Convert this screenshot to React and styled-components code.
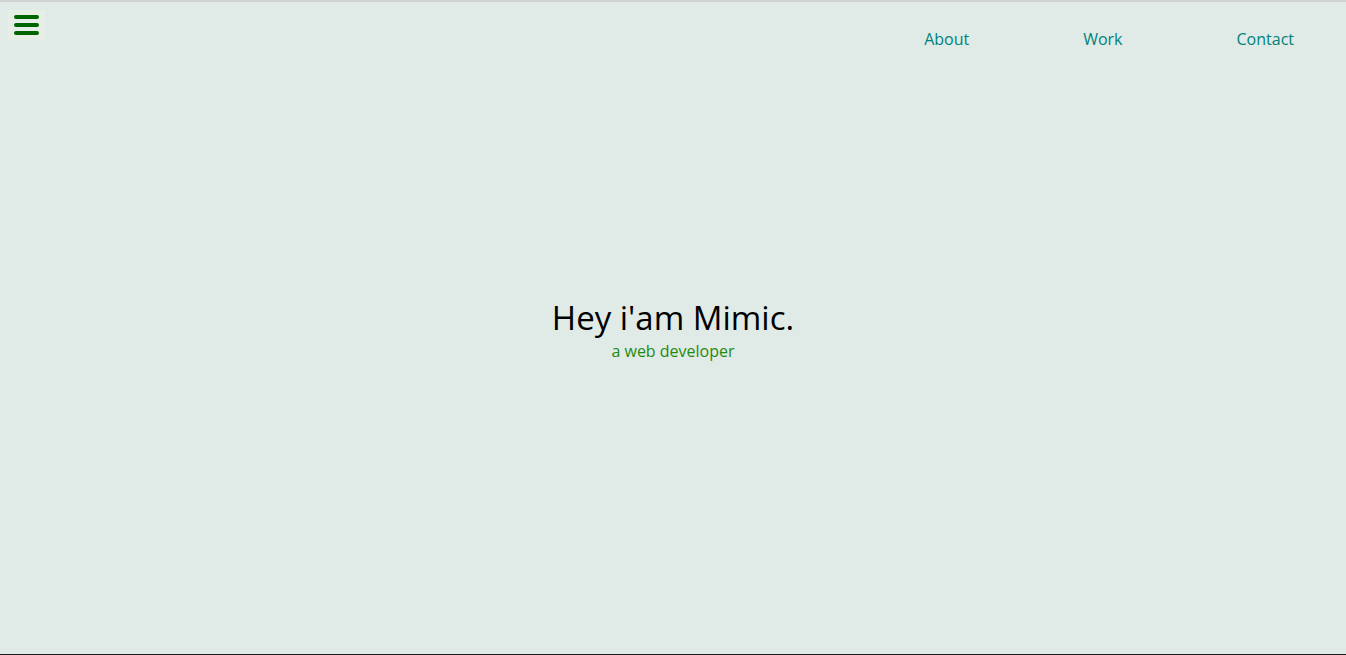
import React from "react";
import styled, { createGlobalStyle } from "styled-components";

const Global = createGlobalStyle`
  html, body { margin: 0; padding: 0; }
  body {
    font-family: "Open Sans", "Noto Sans", sans-serif;
    background: #e0eae6;
  }
`;

const Page = styled.div`
  height: 655px;
  box-sizing: border-box;
  border-top: 2px solid #cfd3d2;
  border-bottom: 1px solid #1c1c1c;
  display: flex;
  flex-direction: column;
  background: #e0eae6;
`;

const Header = styled.header`
  display: flex;
  justify-content: space-between;
  align-items: flex-start;
  height: 70px;
`;

const MenuButton = styled.button`
  margin: 8px 0 0 8px;
  width: 37px;
  height: 30px;
  border: none;
  padding: 0;
  background: #e6eee5;
  display: flex;
  flex-direction: column;
  align-items: center;
  justify-content: center;
  gap: 4px;
  cursor: pointer;
`;

const Bar = styled.span`
  display: block;
  width: 25px;
  height: 4px;
  border-radius: 2px;
  background: #006400;
`;

const Nav = styled.nav`
  display: flex;
  margin-top: 26px;
  margin-right: 52px;
`;

const NavLink = styled.a`
  color: #00827c;
  text-decoration: none;
  font-size: 16px;
  line-height: 22px;
  margin-left: ${(p) => p.$gap}px;
`;

const Hero = styled.main`
  flex: 1;
  display: flex;
  flex-direction: column;
  align-items: center;
  justify-content: center;
  padding-bottom: 68px;
`;

const Title = styled.h1`
  margin: 0;
  font-size: 33px;
  font-weight: 400;
  color: #000;
  line-height: 44px;
`;

const Subtitle = styled.p`
  margin: 0;
  font-size: 16px;
  line-height: 22px;
  color: #1f8a0f;
`;

export default function App() {
  return (
    <>
      <Global />
      <Page>
        <Header>
          <MenuButton aria-label="menu">
            <Bar />
            <Bar />
            <Bar />
          </MenuButton>
          <Nav>
            <NavLink href="#" $gap={0}>About</NavLink>
            <NavLink href="#" $gap={114}>Work</NavLink>
            <NavLink href="#" $gap={114}>Contact</NavLink>
          </Nav>
        </Header>
        <Hero>
          <Title>Hey i'am Mimic.</Title>
          <Subtitle>a web developer</Subtitle>
        </Hero>
      </Page>
    </>
  );
}
